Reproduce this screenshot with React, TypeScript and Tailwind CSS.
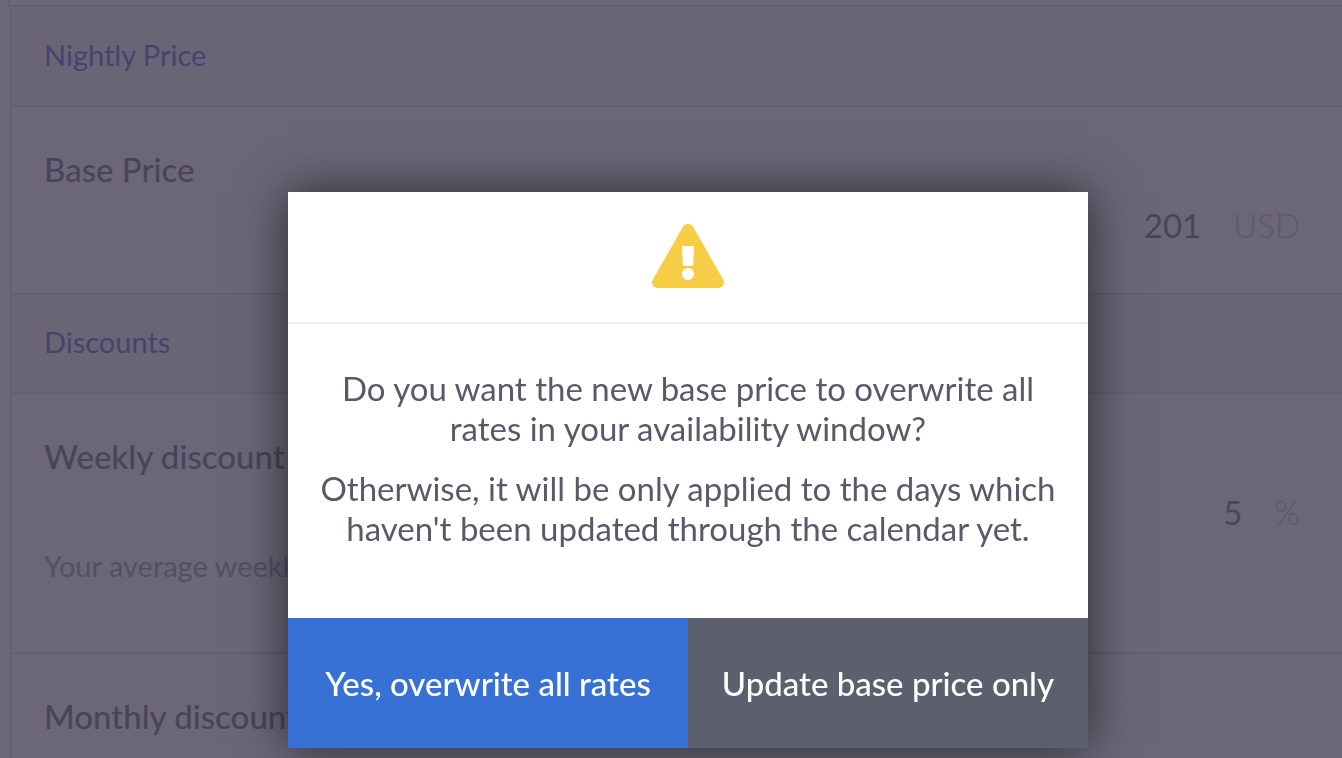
import type { ReactNode } from "react";

function SectionHeading({ children }: { children: ReactNode }) {
  return (
    <h2 className="flex h-[99px] items-center border-b-2 border-[#636070] bg-[#696575] pb-1 pl-8 text-[29px] leading-10 text-[#45446f]">
      {children}
    </h2>
  );
}

type PriceRowProps = {
  id: string;
  label: string;
  value: string;
  unit: string;
  hint?: string;
  className: string;
};

function PriceRow({ id, label, value, unit, hint, className }: PriceRowProps) {
  return (
    <div
      className={`flex justify-between border-b-2 border-[#636070] bg-[#6b6778] pr-[42px] pl-8 ${className}`}
    >
      <div className="pt-10">
        <label
          htmlFor={id}
          className="block text-[33px] leading-[44px] font-medium text-[#494558]"
        >
          {label}
        </label>
        {hint ? (
          <p className="mt-[68px] text-[29px] leading-10 text-[#545064]">
            {hint}
          </p>
        ) : null}
      </div>
      <div className="flex items-start gap-8 pt-24 text-[33px] leading-[44px]">
        <input
          id={id}
          type="text"
          defaultValue={value}
          className="h-11 w-32 bg-transparent text-right text-[#4a465a] outline-none"
        />
        <span className="font-light text-[#5d596b]">{unit}</span>
      </div>
    </div>
  );
}

function WarningIcon() {
  return (
    <svg viewBox="0 0 72 64" className="h-16 w-[72px]" aria-hidden="true">
      <path
        d="M30.8 3 .8 55.500C-1.400 59.500 1.200 64 6 64h60c4.800 0 7.400-4.500 5.200-8.500L41.200 3c-2.300-4-8.100-4-10.400 0Z"
        fill="#f7cd46"
      />
      <path
        d="M31 22h10c.700 0 1.100.4 1 1l-.900 18c0 .700-.4 1-1 1h-8.200c-.600 0-1-.3-1-1L30 23c0-.600.300-1 1-1Z"
        fill="#fff"
      />
      <circle cx="36" cy="50" r="6" fill="#fff" />
    </svg>
  );
}

function OverwriteDialog() {
  return (
    <div className="fixed inset-0 flex items-start justify-center pt-48 pl-[34px]">
      <div
        role="alertdialog"
        aria-modal="true"
        aria-describedby="overwrite-message"
        className="w-full max-w-[800px] bg-white shadow-[0_0_48px_rgba(0,0,0,0.6)]"
      >
        <div className="flex h-[132px] justify-center border-b-2 border-[#ececec] pt-8">
          <WarningIcon />
        </div>
        <div
          id="overwrite-message"
          className="space-y-5 px-6 pt-11 pb-[70px] text-center text-[33px] leading-10 text-[#5b5869]"
        >
          <p>
            Do you want the new base price to overwrite all
            <br />
            rates in your availability window?
          </p>
          <p>
            Otherwise, it will be only applied to the days which
            <br />
            haven't been updated through the calendar yet.
          </p>
        </div>
        <div className="grid h-[130px] grid-cols-2 text-[33px] leading-10 font-medium text-white">
          <button type="button" className="bg-[#3871d6]">
            Yes, overwrite all rates
          </button>
          <button type="button" className="bg-[#5c5f6e]">
            Update base price only
          </button>
        </div>
      </div>
    </div>
  );
}

export default function App() {
  return (
    <div className="h-screen overflow-hidden bg-[#6b6778] font-['Lato',sans-serif]">
      <div className="ml-2 h-[7px] border-b-2 border-l-2 border-[#636070]" />
      <main className="ml-2.5 border-l-2 border-[#656171] pt-px">
        <SectionHeading>Nightly Price</SectionHeading>
        <PriceRow
          id="base-price"
          label="Base Price"
          value="201"
          unit="USD"
          className="h-[188px]"
        />
        <SectionHeading>Discounts</SectionHeading>
        <PriceRow
          id="weekly-discount"
          label="Weekly discount"
          value="5"
          unit="%"
          hint="Your average weekly"
          className="h-[260px]"
        />
        <PriceRow
          id="monthly-discount"
          label="Monthly discount"
          value=""
          unit=""
          className="h-[260px]"
        />
      </main>
      <OverwriteDialog />
    </div>
  );
}
